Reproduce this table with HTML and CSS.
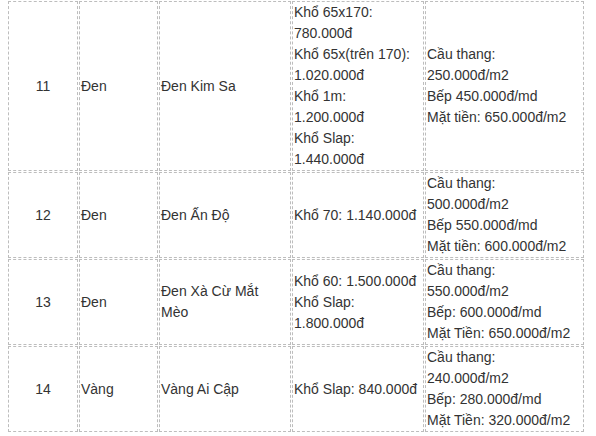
FILE: index.html
```html
<!DOCTYPE html>
<html lang="vi">
<head>
<meta charset="utf-8">
<link rel="stylesheet" href="styles.css">
</head>
<body>
<table class="price-table">
  <colgroup>
    <col class="c-no">
    <col class="c-color">
    <col class="c-name">
    <col class="c-size">
    <col class="c-price">
  </colgroup>
  <tbody>
    <tr class="r-big">
      <td class="num">11</td>
      <td>Đen</td>
      <td>Đen Kim Sa</td>
      <td>Khổ 65x170:<br>780.000đ<br>Khổ 65x(trên 170):<br>1.020.000đ<br>Khổ 1m:<br>1.200.000đ<br>Khổ Slap:<br>1.440.000đ</td>
      <td>Cầu thang:<br>250.000đ/m2<br>Bếp 450.000đ/md<br>Mặt tiền: 650.000đ/m2</td>
    </tr>
    <tr>
      <td class="num">12</td>
      <td>Đen</td>
      <td>Đen Ấn Độ</td>
      <td>Khổ 70: 1.140.000đ</td>
      <td>Cầu thang:<br>500.000đ/m2<br>Bếp 550.000đ/md<br>Mặt tiền: 600.000đ/m2</td>
    </tr>
    <tr>
      <td class="num">13</td>
      <td>Đen</td>
      <td>Đen Xà Cừ Mắt<br>Mèo</td>
      <td>Khổ 60: 1.500.000đ<br>Khổ Slap:<br>1.800.000đ</td>
      <td>Cầu thang:<br>550.000đ/m2<br>Bếp: 600.000đ/md<br>Mặt Tiền: 650.000đ/m2</td>
    </tr>
    <tr>
      <td class="num">14</td>
      <td>Vàng</td>
      <td>Vàng Ai Cập</td>
      <td>Khổ Slap: 840.000đ</td>
      <td>Cầu thang:<br>240.000đ/m2<br>Bếp: 280.000đ/md<br>Mặt Tiền: 320.000đ/m2</td>
    </tr>
  </tbody>
</table>
</body>
</html>
```
FILE: styles.css
```css
html, body {
  margin: 0;
  padding: 0;
  background: #ffffff;
}
body {
  font-family: "Liberation Sans", Arial, sans-serif;
  font-size: 14px;
  line-height: 21px;
  color: #333333;
}
.price-table {
  margin: 0 0 0 7px;
  border-collapse: separate;
  border-spacing: 1px;
  table-layout: fixed;
  width: 578px;
}
.c-no { width: 70px; }
.c-color { width: 79px; }
.c-name { width: 132px; }
.c-size { width: 132px; }
.c-price { width: 159px; }
.price-table td {
  border: 1px dashed #bdbdbd;
  padding: 0 1px;
  vertical-align: middle;
  text-align: left;
}
.price-table td.num {
  text-align: center;
}
```
